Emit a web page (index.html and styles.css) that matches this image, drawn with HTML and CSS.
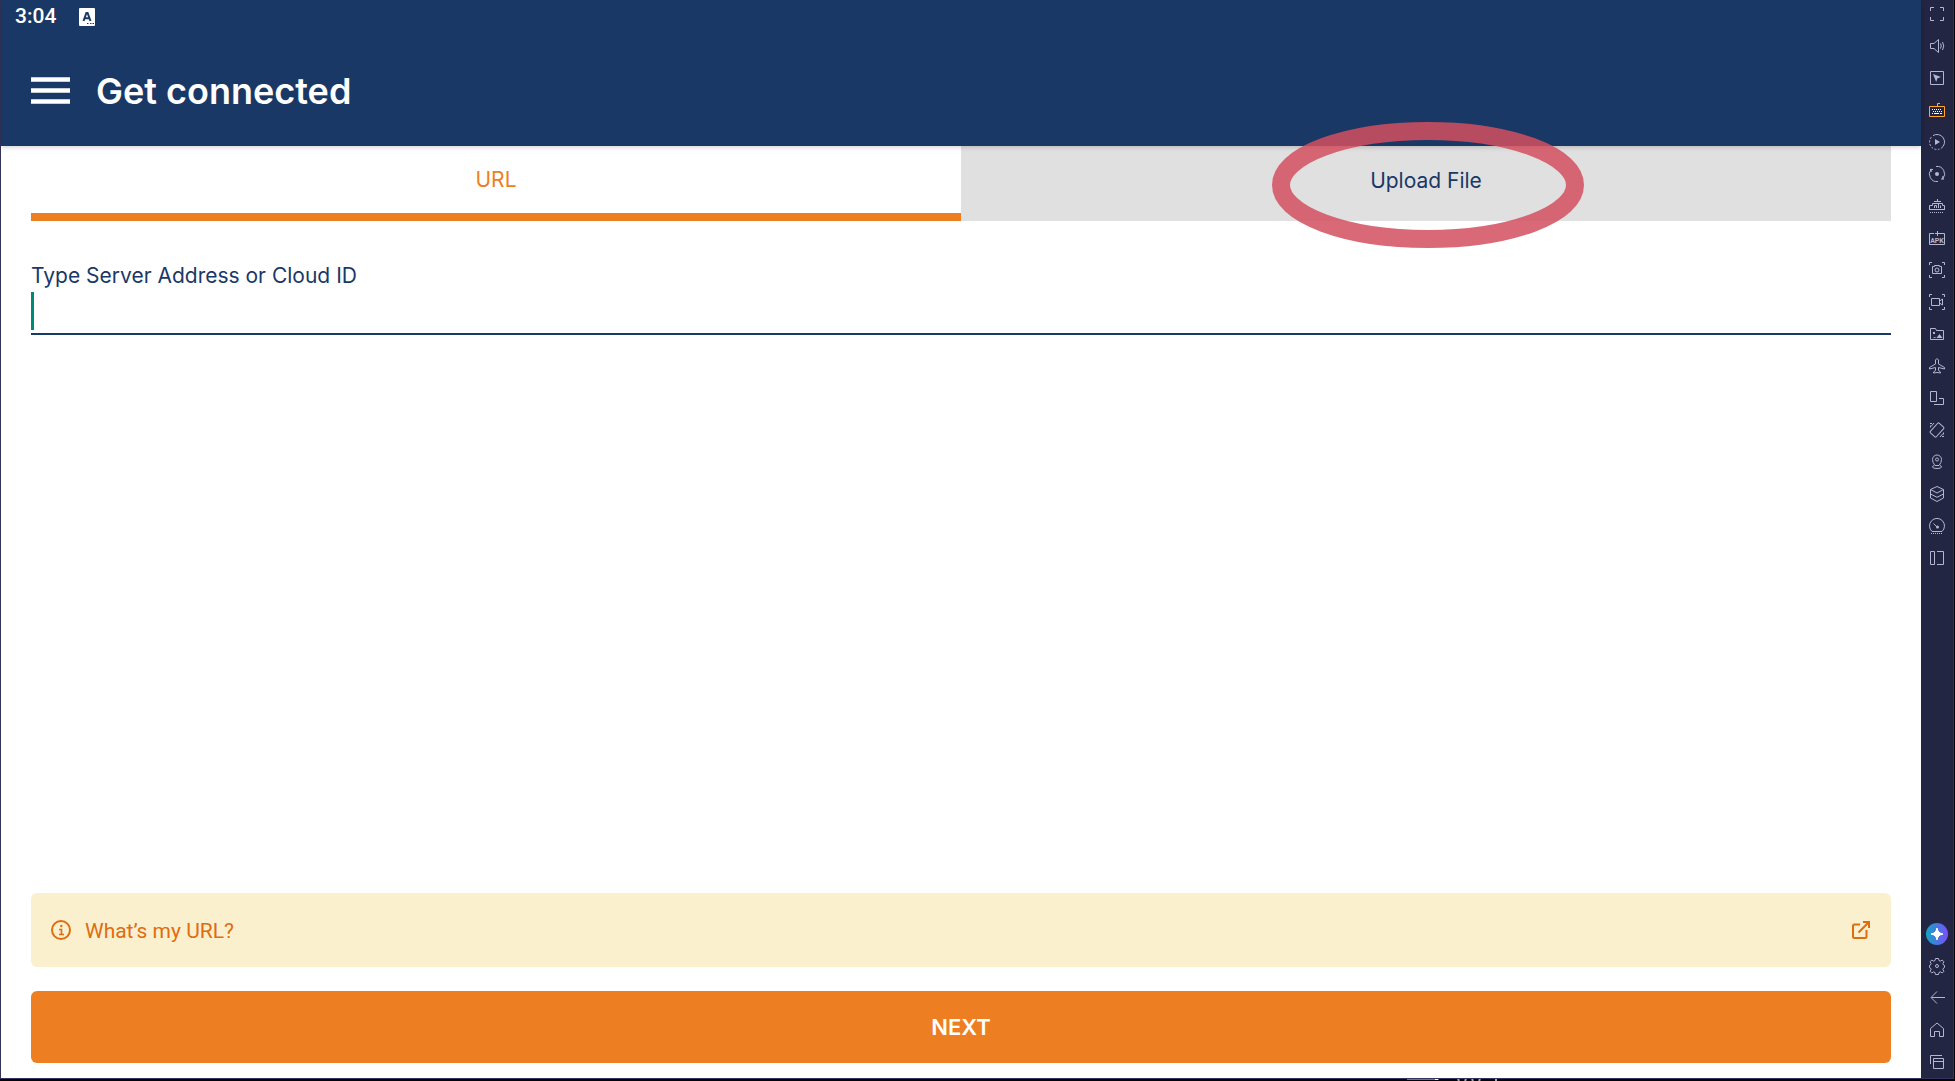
FILE: index.html
```html
<!DOCTYPE html>
<html lang="en">
<head>
<meta charset="utf-8">
<meta name="viewport" content="width=device-width, initial-scale=1">
<title>Get connected</title>
<link rel="stylesheet" href="styles.css">
</head>
<body>
<div class="window">
  <div class="app">
    <header class="header">
      <div class="status">
        <span>3:04</span>
        <svg class="status-icon" viewBox="0 0 16 18" aria-hidden="true"><rect width="16" height="18" rx="1" fill="#fff"/><path d="M4.500 13 7.400 5h1.200L11.500 13M5.500 10.300h5" fill="none" stroke="#1a3866" stroke-width="2"/><path d="M8 15.500h1.500M11 15.500h1.500M13.500 15.500H15" stroke="#1a3866"/></svg>
      </div>
      <div class="toolbar">
        <button class="menu" aria-label="Open menu"><svg viewBox="0 0 39 27" aria-hidden="true"><path d="M0 2.500h39M0 13.500h39M0 24.500h39" stroke="#fff" stroke-width="4.600"/></svg></button>
        <h1 class="title">Get connected</h1>
      </div>
    </header>
    <main class="main">
      <div class="tabs" role="tablist">
        <button class="tab tab-active" role="tab" aria-selected="true">URL</button>
        <button class="tab" role="tab" aria-selected="false">Upload File
          <svg class="highlight" viewBox="0 0 312 126" aria-hidden="true"><ellipse cx="156" cy="63" rx="147" ry="54" fill="none" stroke="#d44f5f" stroke-opacity=".85" stroke-width="18"/></svg>
        </button>
      </div>
      <form class="form">
        <label class="label" for="server">Type Server Address or Cloud ID</label>
        <div class="field">
          <span class="caret"></span>
          <input class="input" id="server" type="text">
        </div>
      </form>
      <a class="info" href="#">
        <svg class="info-icon" viewBox="0 0 20 20" aria-hidden="true"><circle cx="10" cy="10" r="9" fill="none" stroke="currentColor" stroke-width="2"/><path d="M8 9.500h2.500V14M8 14.500h5" fill="none" stroke="currentColor" stroke-width="1.600"/><circle cx="10.300" cy="6" r="1.200" fill="currentColor"/></svg>
        <span class="info-text">What’s my URL?</span>
        <svg class="link-icon" viewBox="0 0 18 18" aria-hidden="true"><path d="M8 3.500H2.500A1.500 1.500 0 0 0 1 5v10.500A1.500 1.500 0 0 0 2.500 17H13a1.500 1.500 0 0 0 1.500-1.500V9M11 1h6v6M17 1 6.500 11.500" fill="none" stroke="currentColor" stroke-width="2"/></svg>
      </a>
      <button class="next">NEXT</button>
    </main>
  </div>
  <aside class="side">
    <div class="tools">
      <button class="tool" aria-label="Full screen"><svg viewBox="0 0 18 18"><path d="M2.500 6V2.500H6M12 2.500h3.500V6M15.500 12v3.500H12M6 15.500H2.500V12"/></svg></button>
      <button class="tool" aria-label="Volume"><svg viewBox="0 0 18 18"><path d="M2.500 6.500H6l4.500-4v13l-4.500-4H2.500zM12.500 6.500q1.500 2.500 0 5M14.500 5q2.500 4 0 8"/></svg></button>
      <button class="tool" aria-label="Lock cursor"><svg viewBox="0 0 18 18"><path d="M2.500 2.500h13v13h-13z"/><path class="solid" d="m5 5 8 3-3.500 1.200L8.200 13z"/></svg></button>
      <button class="tool" aria-label="Game controls"><svg viewBox="0 0 18 18"><path class="amber" d="M1.500 5.500h15v10h-15zM9.500 5.500v-3H12"/><path class="white" d="M4 8.500h1M6 8.500h1M8 8.500h1M10 8.500h1M12 8.500h1M13 10.500h1M5 10.500h1M7 10.500h1M9 10.500h1M11 10.500h1M4 12.500h1M6 12.500h5M12 12.500h2"/></svg></button>
      <button class="tool" aria-label="Macro playback"><svg viewBox="0 0 18 18"><path d="M5 2.600A7.500 7.500 0 1 1 13 15.400"/><path d="M3.300 4.200a7.500 7.500 0 0 0 8.200 11.900" stroke-dasharray="2 1.500"/><path class="solid" d="M7 6v6l5-3z"/></svg></button>
      <button class="tool" aria-label="Sync"><svg viewBox="0 0 18 18"><path d="M8 1.500A7.500 7.500 0 0 1 14.800 13.800M10 16.500A7.500 7.500 0 0 1 3.200 4.200M14.800 11v3.200M3.200 7V3.800M2 4.500h3M13 14h3"/><circle class="solid" cx="9" cy="9" r="2"/></svg></button>
      <button class="tool" aria-label="Memory trim"><svg viewBox="0 0 18 18"><path d="M9.500 2v2.500M6 4.500h7M1.500 13v-4.500h3V6.500h10v2h2V13M1.500 12.500h15M6.500 11V8.500h2V11M10.500 11V7M12.500 11V8.500"/><path d="M2 15.500h14" stroke-dasharray="1 1"/></svg></button>
      <button class="tool" aria-label="Install APK"><svg viewBox="0 0 18 18"><path d="M6 4.500H1.500v11h15v-11H12M9.500 2v5M7 4.500h5"/><text x="9" y="14" text-anchor="middle">APK</text></svg></button>
      <button class="tool" aria-label="Screenshot"><svg viewBox="0 0 18 18"><path d="M1.500 4V1.500H4M14 1.500h2.500V4M16.500 14v2.500H14M4 16.500H1.500V14M4.500 5.500h2v-1h5v1h2v7h-9z"/><circle cx="9" cy="9" r="2"/></svg></button>
      <button class="tool" aria-label="Record screen"><svg viewBox="0 0 18 18"><path d="M1.500 4V1.500H4M14 1.500h2.500V4M16.500 14v2.500H14M4 16.500H1.500V14M3.500 5.500h8v7h-8zM11.500 8l3-2v6l-3-2"/></svg></button>
      <button class="tool" aria-label="Media manager"><svg viewBox="0 0 18 18"><path d="M2.500 14.500v-11h5l1 2h7v9z"/><path class="solid" d="m5 13 1.500-1 2 1 3-4 3 4zM5 7h2v2H5z"/></svg></button>
      <button class="tool" aria-label="Airplane mode"><svg viewBox="0 0 18 18"><path d="M7.500 7V3q1.500-3 3 0v4l6 3.500v1.500l-6-1.500v3l2 1.500v1l-3.500-.5-3.500.5v-1l2-1.500v-3l-6 1.500v-1.500z"/></svg></button>
      <button class="tool" aria-label="Multi window"><svg viewBox="0 0 18 18"><path d="M2.500 2.500h6v10h-6zM11 9.500h4.500v6H6"/></svg></button>
      <button class="tool" aria-label="Rotate"><svg viewBox="0 0 18 18"><rect x="5" y="2.500" width="8" height="13" rx="1" transform="rotate(42 9 9)"/><path d="M2 2.500h2M3 5.500 6 2M2.500 4.500v2M16 15.500h-2M15 12.500 12 16M15.500 13.500v-2"/></svg></button>
      <button class="tool" aria-label="Location"><svg viewBox="0 0 18 18"><path d="M7 12.500Q4.500 9.500 4.500 6.500a4.500 4.500 0 0 1 9 0q0 3-2.500 6zM6 12.500q-1.500.5-1.500 1.500 0 1.500 4.500 1.500t4.500-1.500q0-1-1.500-1.500"/><circle cx="9" cy="6.500" r="1.500"/></svg></button>
      <button class="tool" aria-label="Instances"><svg viewBox="0 0 18 18"><path d="m9 1.500 6.500 3L9 8 2.500 4.500zM2.500 4.500v8.500L9 16.500l6.500-3.500V4.500M2.500 9 9 12.300 15.500 9"/></svg></button>
      <button class="tool" aria-label="Performance"><svg viewBox="0 0 18 18"><path d="M4 14.500a7.500 7.500 0 1 1 10 0zM5.500 6.500 9 10"/><path d="M3 16.500h12" stroke-dasharray="1 1"/><circle class="solid" cx="9.500" cy="10" r="1.500"/></svg></button>
      <button class="tool" aria-label="Split view"><svg viewBox="0 0 18 18"><path d="M2.500 2.500h4v13h-4zM9 2.500h6.500v13H9"/></svg></button>
    </div>
    <div class="tools">
      <button class="tool" aria-label="Assistant"><svg class="ai" viewBox="0 0 22 22"><defs><linearGradient id="ai"><stop stop-color="#12a5c4"/><stop offset="1" stop-color="#7d4dfc"/></linearGradient></defs><circle cx="11" cy="11" r="11" fill="url(#ai)" stroke="none"/><path class="star" d="M11 5q.8 5.200 6 6-5.200.8-6 6-.8-5.200-6-6 5.200-.8 6-6z"/></svg></button>
      <button class="tool" aria-label="Settings"><svg viewBox="0 0 18 18"><path d="M7.500 1.500h3l.5 2 1.500.6 1.800-1 1.600 1.600-1 1.800.6 1.500 1 .5v2l-1 .5-.6 1.500 1 1.800-1.600 1.600-1.800-1-1.500.6-.5 2h-3l-.5-2-1.500-.6-1.800 1-1.600-1.600 1-1.800-.6-1.500-1-.5v-2l1-.5.6-1.500-1-1.800 1.600-1.600 1.800 1L7 3.500z"/><circle cx="9" cy="9" r="1.500"/></svg></button>
      <button class="tool" aria-label="Back"><svg viewBox="0 0 18 18"><path d="M17 8.500H3.500M9 2.500l-6 6 6 6"/></svg></button>
      <button class="tool" aria-label="Home"><svg viewBox="0 0 18 18"><path d="M2.500 15.500v-8L9 2l6.500 5.500v8h-4v-5h-5v5z"/></svg></button>
      <button class="tool" aria-label="Recent apps"><svg viewBox="0 0 18 18"><path d="M2.500 11V2.500H14M5.500 5.500h10v10h-10zM5.500 8.500h10"/></svg></button>
    </div>
  </aside>
</div>
<div class="backdrop"><svg viewBox="0 0 92 2" aria-hidden="true"><path d="M0 .5h32" stroke="#77727a"/><path d="M28 .5h3" stroke="#fff"/><path d="M51 0l1 2M59 0l-1 2M65 0l1 2M73 0l-1 2M89 0v2" stroke="#aaa" stroke-width="2"/></svg></div>
</body>
</html>
```

FILE: styles.css
```css
* {
  box-sizing: border-box;
}

body {
  margin: 0;
  min-height: 100vh;
  display: flex;
  flex-direction: column;
  padding-right: 1px;
  background: #050508;
  font-family: Inter, "Liberation Sans", sans-serif;
  color: #1a3866;
}

button {
  font: inherit;
  color: inherit;
  border: 0;
  padding: 0;
  background: none;
}

svg {
  display: block;
}

.window {
  flex: 1;
  display: flex;
  border: 1px solid #34345a;
  border-top: 0;
}

/* sliver of the desktop below the window */
.backdrop {
  height: 2px;
  padding-left: 72%;
  overflow: hidden;
}

.backdrop svg {
  width: 92px;
  height: 2px;
}

.app {
  flex: 1;
  display: flex;
  flex-direction: column;
  background: #fff;
}

.header {
  position: relative;
  z-index: 1;
  height: 146px;
  background: #1a3866;
  color: #fff;
  box-shadow: 0 1px 5px rgba(0, 0, 0, 0.2);
}

.status {
  display: flex;
  align-items: center;
  gap: 23px;
  height: 33px;
  padding-left: 14px;
  font: 500 21px/33px Roboto, sans-serif;
}

.status-icon {
  width: 16px;
  height: 18px;
}

.toolbar {
  display: flex;
  align-items: center;
  gap: 26px;
  height: 115px;
  padding: 0 30px;
}

.menu svg {
  width: 39px;
  height: 27px;
}

.title {
  margin: 0;
  font-size: 36px;
  line-height: 44px;
  font-weight: 600;
}

.main {
  flex: 1;
  display: flex;
  flex-direction: column;
  padding: 0 30px 15px;
}

.tabs {
  display: grid;
  grid-template-columns: 1fr 1fr;
}

.tab {
  position: relative;
  height: 75px;
  padding-bottom: 6px;
  background: #e0e0e0;
  font-size: 21px;
  font-weight: 400;
}

.tab-active {
  padding-bottom: 0;
  border-bottom: 8px solid #ed7f22;
  background: none;
  color: #ed7f22;
}

.highlight {
  position: absolute;
  z-index: 2;
  left: calc(50% + 2px);
  top: calc(50% + 1px);
  width: 312px;
  height: 126px;
  transform: translate(-50%, -50%);
}

.form {
  flex: 1;
  padding-top: 40px;
}

.label {
  display: block;
  font-size: 21px;
  line-height: 30px;
  font-weight: 400;
}

.field {
  display: flex;
  align-items: center;
  height: 44px;
  padding-bottom: 2px;
  border-bottom: 2px solid #1a3866;
}

.caret {
  width: 3px;
  height: 38px;
  background: #00897b;
}

.input {
  flex: 1;
  height: 38px;
  padding: 0;
  border: 0;
  outline: 0;
  background: none;
  font: inherit;
  font-size: 21px;
}

.info {
  display: flex;
  align-items: center;
  height: 74px;
  margin-bottom: 24px;
  padding: 0 21px 0 20px;
  border-radius: 6px;
  background: #fbf0ce;
  color: #e06c10;
  font: 400 21px/30px Roboto, sans-serif;
  text-decoration: none;
}

.info-icon {
  width: 20px;
  height: 20px;
}

.info-text {
  flex: 1;
  padding: 2px 0 0 14px;
}

.link-icon {
  width: 18px;
  height: 18px;
}

.next {
  height: 72px;
  border-radius: 6px;
  background: #ed7f22;
  color: #fff;
  font-size: 22px;
  font-weight: 600;
}

.side {
  display: flex;
  flex-direction: column;
  justify-content: space-between;
  width: 32px;
  padding: 5px 7px 7px;
  background: #232642;
}

.tools {
  display: flex;
  flex-direction: column;
  gap: 14px;
}

.tool {
  display: flex;
  align-items: center;
  justify-content: center;
  width: 18px;
  height: 18px;
}

.tool svg {
  flex: none;
  width: 18px;
  height: 18px;
  fill: none;
  stroke: #b4b6d2;
}

.tool .ai {
  width: 22px;
  height: 22px;
}

.tool .solid {
  fill: #b4b6d2;
  stroke: none;
}

.tool .amber {
  stroke: #ffa62b;
}

.tool .white {
  stroke: #fff;
}

.tool .star {
  fill: #fff;
  stroke: #fff;
}

.tool text {
  fill: #b4b6d2;
  stroke: none;
  font: 700 7px Roboto, sans-serif;
}
```
